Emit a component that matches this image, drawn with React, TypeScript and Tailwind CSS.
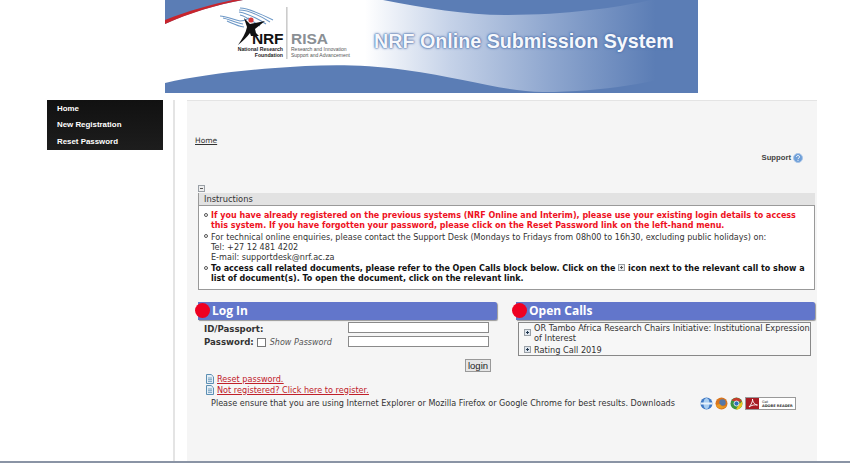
const PlusBox = ({ minus = false, dark = false }: { minus?: boolean; dark?: boolean }) => (
  <svg width="7" height="7" viewBox="0 0 7 7" className="inline-block shrink-0 align-[-0.5px]">
    <rect x="0.5" y="0.5" width="6" height="6" fill={dark ? "#dfe6ee" : "#eeeeee"} stroke="#9aa0a6" />
    <path d={minus ? "M2 3.5H5" : "M2 3.5H5M3.5 2V5"} stroke={dark ? "#22384f" : "#555"} strokeWidth="1" />
  </svg>
);

const Doc = () => (
  <svg width="8" height="10" viewBox="0 0 8 10" className="shrink-0">
    <path d="M0.5 0.5H5.2L7.5 2.8V9.5H0.5Z" fill="#e4eef6" stroke="#5c8fb3" />
    <path d="M2 4H6M2 5.7H6M2 7.4H6" stroke="#5c8fb3" strokeWidth="0.8" />
  </svg>
);

const Banner = () => (
  <svg width="533" height="93" viewBox="0 0 533 93" className="block">
    <defs>
      <linearGradient id="sw" x1="0" x2="1" y1="0" y2="0">
        <stop offset="0" stopColor="#ffffff" />
        <stop offset="0.375" stopColor="#ffffff" />
        <stop offset="0.535" stopColor="#c5d2e8" />
        <stop offset="0.72" stopColor="#8fa7cf" />
        <stop offset="0.92" stopColor="#5b7db5" />
      </linearGradient>
    </defs>
    <rect width="533" height="93" fill="#5b7db5" />
    <path d="M0 24C25 12 55 4 78 0H218C260 8 300 15 340 15C400 15 450 8 486 0H533V70C490 82 440 92 378 92C340 92 300 78 240 70C190 63 150 65 110 68C70 71 30 76 0 83Z" fill="url(#sw)" />
    <path d="M0 20C22 11 48 4 68 0H78C50 5 25 13 0 24Z" fill="#c8242c" />
    <g fill="none" stroke="#6c97c6" strokeWidth="1.1">
      <path d="M55 16C62 16 68 20 75 21C80 21 82 19 84 18" />
      <path d="M58 18C64 19 70 23 78 24" />
      <path d="M62 21C67 23 72 26 79 27" />
      <path d="M75 8C83 8 96 14 108 20" />
      <path d="M74 10C82 10 94 15 105 22" />
      <path d="M74 12C80 13 90 17 101 24" />
      <path d="M75 15C80 16 86 20 95 26" />
    </g>
    <path d="M73 45C77 39 81 33 82 27L79 18L85 24L100 21L90 29L91 33L94 36L86 36L85 33C82 37 78 41 73 45Z" fill="#111" />
    <circle cx="86" cy="20" r="2.6" fill="#d8383a" />
    <text x="87" y="44" fontFamily="Liberation Sans" fontWeight="700" fontSize="15.5" fill="#111" letterSpacing="-0.2">NRF</text>
    <text x="118" y="51" textAnchor="end" fontFamily="Liberation Sans" fontWeight="700" fontSize="5.2" fill="#222">National Research</text>
    <text x="118" y="57" textAnchor="end" fontFamily="Liberation Sans" fontWeight="700" fontSize="5.2" fill="#222">Foundation</text>
    <rect x="121.500" y="7" width="0.8" height="52" fill="#9a9a9a" />
    <text x="126" y="44" fontFamily="Liberation Sans" fontWeight="700" fontSize="15.5" fill="#8a8f94">RISA</text>
    <text x="126" y="51" fontFamily="Liberation Sans" fontSize="5" fill="#555">Research and Innovation</text>
    <text x="126" y="57" fontFamily="Liberation Sans" fontSize="5" fill="#555">Support and Advancement</text>
  </svg>
);

const Browsers = () => (
  <div className="flex items-center gap-[2px]">
    <svg width="13" height="13" viewBox="0 0 13 13">
      <circle cx="6.500" cy="6.500" r="6" fill="#3f78c4" />
      <ellipse cx="6.500" cy="6.500" rx="3" ry="5.500" fill="#a9cdf0" />
      <rect x="0.500" y="5.500" width="12" height="2" fill="#e8f2fb" />
    </svg>
    <svg width="13" height="13" viewBox="0 0 13 13">
      <circle cx="6.500" cy="6.500" r="6" fill="#d9741c" />
      <circle cx="7.500" cy="5.500" r="3.200" fill="#5577a8" />
      <path d="M1 8C2 12 9 13 12 8C10 10 6 10 5 7Z" fill="#e99a22" />
    </svg>
    <svg width="13" height="13" viewBox="0 0 13 13">
      <circle cx="6.500" cy="6.500" r="6" fill="#3a9440" />
      <path d="M1.500 3.500A6 6 0 0 1 12 4.500H6.500Z" fill="#c93a2c" />
      <path d="M12 4.500A6 6 0 0 1 6 12.500L8.500 8Z" fill="#edc422" />
      <circle cx="6.500" cy="6.500" r="2.500" fill="#2f6fb8" stroke="#fff" strokeWidth="0.8" />
    </svg>
    <div className="flex h-[13px] w-[51px] items-stretch border border-[#999] bg-white">
      <div className="flex w-[13px] items-center justify-center bg-[#a81c24]">
        <svg width="10" height="10" viewBox="0 0 10 10">
          <path d="M1 9C3 7 5 3 4.500 1C4.500 4 7 7 9.500 7C7 6.500 3.500 7 1 9Z" fill="none" stroke="#fff" strokeWidth="0.9" />
        </svg>
      </div>
      <div className="flex-1 whitespace-nowrap pl-[3px] pt-[2px] text-[3.500px] leading-[4px] text-[#333]">
        Get
        <br />
        <span className="font-bold">ADOBE READER</span>
      </div>
    </div>
  </div>
);

const SectionBar = ({ title, open = false }: { title: string; open?: boolean }) => (
  <div className={`relative h-[18px] rounded-tr-[2px] rounded-br-[2px] bg-[#6276cb] text-[12px] leading-[18px] font-bold text-white shadow-[1px_1px_1px_#9a9a9a] [font-family:'Open_Sans',sans-serif] ${open ? "pl-[13px]" : "pl-[14px]"}`}>
    <span className={`absolute top-[1px] h-[15px] w-[15px] rounded-full bg-[#ee0022] ${open ? "left-[-4px]" : "left-[-3px]"}`} />
    {title}
  </div>
);

function Item({ className, children }: { className: string; children: React.ReactNode }) {
  return (
    <div className={`flex gap-[3px] ${className}`}>
      <span className="mt-[2px] h-[4px] w-[4px] shrink-0 rounded-full border border-[#555] bg-white" />
      <div>{children}</div>
    </div>
  );
}

export default function App() {
  return (
    <div className="h-[463px] w-[850px] overflow-hidden bg-white text-[8.100px] text-[#333] [font-family:'DejaVu_Sans',sans-serif]">
      <div className="ml-[165px] h-[100px] w-[533px]">
        <div className="relative h-[93px] overflow-hidden">
          <Banner />
          <div className="absolute left-[209px] top-[29px] text-[19.700px] leading-[24px] font-bold text-[#f6f8fc] [font-family:'Liberation_Sans',sans-serif] [text-shadow:0_0_3px_#5173ad,0_0_2px_#5173ad,0_0_1px_#5173ad]">
            NRF Online Submission System
          </div>
        </div>
      </div>

      <div className="flex h-[361px] items-stretch">
        <nav className="ml-[47px] h-[50px] w-[116px] bg-gradient-to-b from-[#111] to-[#1d1d1d] pl-[10px] pt-[1px] text-[7.900px] font-bold leading-[16.300px] text-white [font-family:'Liberation_Sans',sans-serif]">
          <div>Home</div>
          <div>New Registration</div>
          <div>Reset Password</div>
        </nav>
        <div className="ml-[10px] w-[2px] bg-[#e4e4e4]" />
        <main className="ml-[12px] w-[630px] border-t border-[#e4e4e4] bg-[#f5f5f5] pl-[8px] pt-[35px]">
          <a className="block w-fit text-[7.500px] leading-[10px] text-[#333] underline">Home</a>
          <div className="mt-[6px] flex items-center justify-end gap-[2px] pr-[14px] text-[7.700px] font-bold text-[#444] [font-family:'Liberation_Sans',sans-serif]">
            Support
            <svg width="10" height="10" viewBox="0 0 10 10">
              <circle cx="5" cy="5" r="4.500" fill="#6f9fd8" stroke="#a9c5e8" />
              <path d="M3.500 4C3.500 2 6.500 2 6.500 4C6.500 5 5 5 5 6.200M5 7.200V8" stroke="#fff" fill="none" />
            </svg>
          </div>
          <div className="ml-[3px] mt-[21px] w-[617px]">
            <div className="h-[8px] leading-[0]"><PlusBox minus /></div>
            <div className="h-[12px] border-l border-[#999] bg-[#e2e2e2] pl-[5px] text-[8.300px] leading-[12px] text-[#333]">Instructions</div>
            <div className="flex h-[85px] flex-col border border-[#999] bg-white pl-[5px] pr-[8px] pt-[5px] leading-[10.200px]">
              <Item className="text-[8px] font-bold text-[#ee1122]">
                If you have already registered on the previous systems (NRF Online and Interim), please use your existing login details to access this system. If you have forgotten your password, please click on the Reset Password link on the left-hand menu.
              </Item>
              <Item className="mt-[1px] text-[#333]">
                For technical online enquiries, please contact the Support Desk (Mondays to Fridays from 08h00 to 16h30, excluding public holidays) on:
                <br />
                Tel: +27 12 481 4202
                <br />
                E-mail: supportdesk@nrf.ac.za
              </Item>
              <Item className="mt-[1px] text-[8px] font-bold text-[#111]">
                To access call related documents, please refer to the Open Calls block below. Click on the <PlusBox /> icon next to the relevant call to show a list of document(s). To open the document, click on the relevant link.
              </Item>
            </div>
          </div>

          <div className="mt-[12px] flex w-[620px] gap-[19px] pl-[3px]">
            <section className="w-[299px]">
              <SectionBar title="Log In" />
              <div className="mt-[2px] flex justify-between pl-[6px] pr-[8px]">
                <div className="text-[8.600px] font-bold leading-[13px] text-[#333]">
                  <div className="pt-[1px]">ID/Passport:</div>
                  <div className="flex items-center gap-[3px]">
                    Password:
                    <span className="h-[9px] w-[9px] border border-[#767676] bg-white" />
                    <span className="ml-[1px] text-[8px] font-normal italic text-[#555]">Show Password</span>
                  </div>
                </div>
                <div className="flex flex-col gap-[3px]">
                  <input className="h-[11px] w-[141px] border border-[#8a8a8a] bg-white" aria-label="ID/Passport" />
                  <input className="h-[11px] w-[141px] border border-[#8a8a8a] bg-white" aria-label="Password" />
                </div>
              </div>
              <div className="mt-[10px] flex justify-end pr-[6px]">
                <button className="h-[13px] w-[26px] border border-[#999] bg-[#e6e6e6] text-[9.500px] leading-[11px] text-[#222] [font-family:'Liberation_Sans',sans-serif]">login</button>
              </div>
              <div className="mt-[2px] flex items-center gap-[3px] pl-[8px] text-[8.150px] leading-[11px] text-[#c0202a] underline"><Doc /><a>Reset password.</a></div>
              <div className="flex items-center gap-[3px] pl-[8px] text-[8.150px] leading-[11px] text-[#c0202a] underline"><Doc /><a>Not registered? Click here to register.</a></div>
            </section>
            <section className="w-[299px]">
              <SectionBar title="Open Calls" open />
              <div className="ml-[2px] mt-[2px] h-[34px] w-[293px] border border-[#888] bg-[#f7f7f7] pl-[5px] text-[8.200px] leading-[10px] text-[#333]">
                <div className="flex items-center gap-[3px]"><PlusBox dark /><span>OR Tambo Africa Research Chairs Initiative: Institutional Expression of Interest</span></div>
                <div className="mt-[2px] flex items-center gap-[3px]"><PlusBox dark /><span>Rating Call 2019</span></div>
              </div>
            </section>
          </div>
          <div className="mt-[1px] flex items-center pl-[16px] text-[#333]">
            <span className="w-[489px] whitespace-nowrap leading-[13px]">Please ensure that you are using Internet Explorer or Mozilla Firefox or Google Chrome for best results. Downloads</span>
            <Browsers />
          </div>
        </main>
      </div>
      <div className="h-[2px] bg-[#8a94a5]" />
    </div>
  );
}
